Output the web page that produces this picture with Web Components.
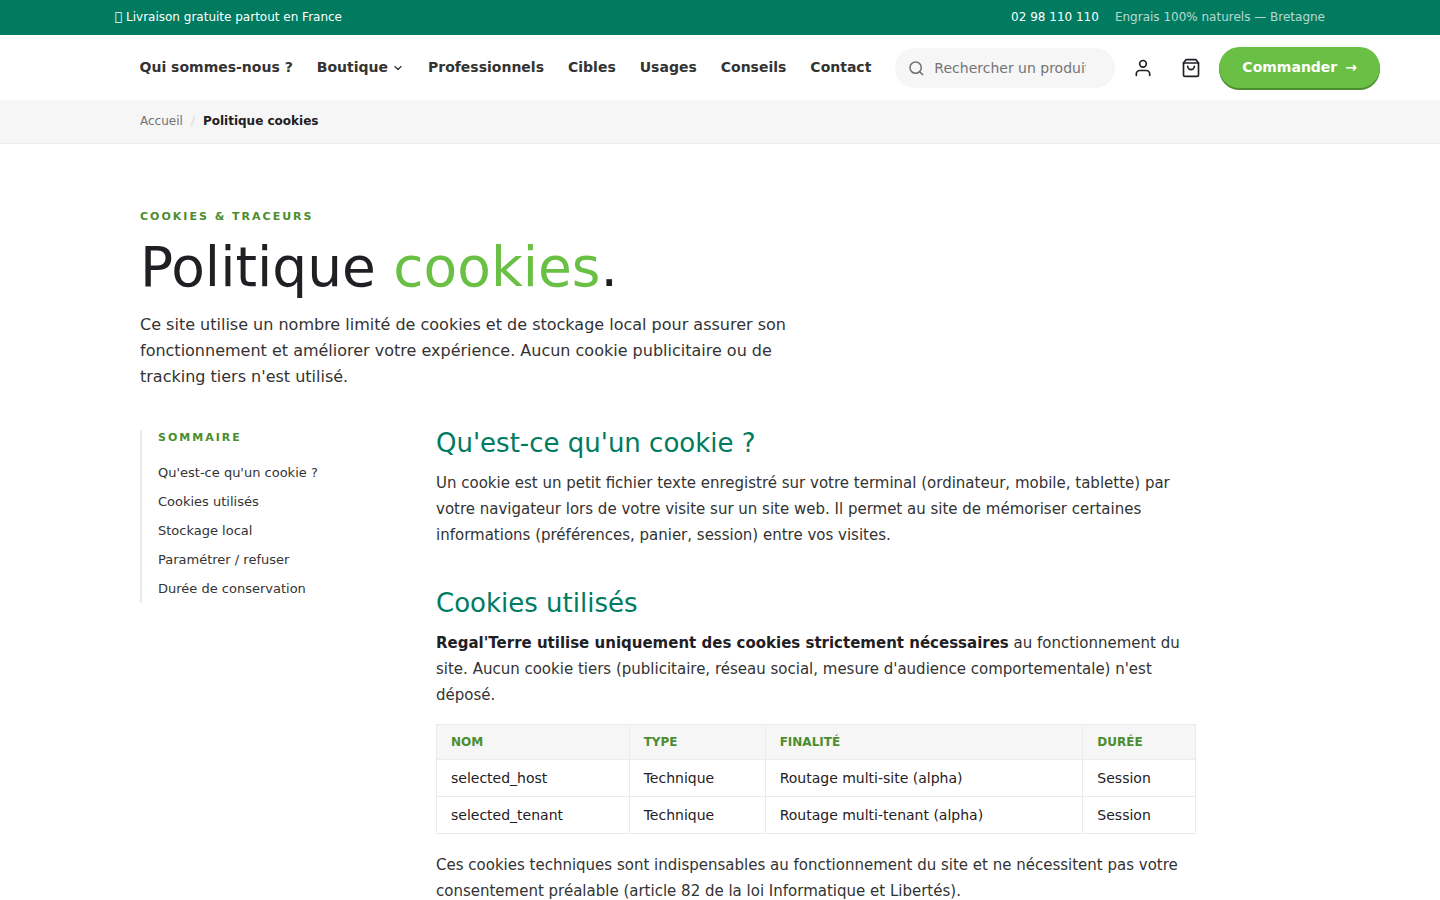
<!DOCTYPE html>
<html lang="fr">
<head>
<meta charset="utf-8">
<meta name="viewport" content="width=device-width, initial-scale=1">
<title>Politique cookies</title>
<style>
  :root {
    --green-dark: #007b5f;
    --green: #6abf45;
    --green-deep: #4b8d2f;
    --ink: #1f2024;
    --text: #333333;
    --muted: #6f7276;
    --line: #ebebeb;
    --soft: #f6f6f6;
    --wrap: 1160px;
  }

  body {
    margin: 0;
    background: #ffffff;
    color: var(--text);
    font-family: "DejaVu Sans", sans-serif;
    font-size: 15px;
    line-height: 26px;
  }

  strong {
    color: var(--ink);
  }
</style>
</head>
<body>
<top-bar>
  <span>&#xf0d1; Livraison gratuite partout en France</span>
  <a slot="phone" href="tel:0298110110">02 98 110 110</a>
  <span slot="note">Engrais 100% naturels — Bretagne</span>
</top-bar>

<site-header>
  <nav-link href="#qui">Qui sommes-nous ?</nav-link>
  <nav-link href="#boutique" menu>Boutique</nav-link>
  <nav-link href="#pro">Professionnels</nav-link>
  <nav-link href="#cibles">Cibles</nav-link>
  <nav-link href="#usages">Usages</nav-link>
  <nav-link href="#conseils">Conseils</nav-link>
  <nav-link href="#contact">Contact</nav-link>
  <search-box slot="tools"></search-box>
  <icon-button slot="tools" icon="user" label="Mon compte"></icon-button>
  <icon-button slot="tools" icon="bag" label="Panier"></icon-button>
  <order-button slot="tools" href="#commander">Commander</order-button>
</site-header>

<bread-crumb>
  <a slot="parent" href="#accueil">Accueil</a>
  Politique cookies
</bread-crumb>

<legal-page>
  <page-intro slot="intro">
    <span slot="eyebrow">Cookies &amp; traceurs</span>
    <span slot="title">Politique <page-accent>cookies</page-accent>.</span>
    Ce site utilise un nombre limité de cookies et de stockage local pour assurer son fonctionnement et améliorer votre expérience. Aucun cookie publicitaire ou de tracking tiers n'est utilisé.
  </page-intro>

  <page-summary slot="summary">
    <a href="#definition">Qu'est-ce qu'un cookie ?</a>
    <a href="#utilises">Cookies utilisés</a>
    <a href="#stockage">Stockage local</a>
    <a href="#refuser">Paramétrer / refuser</a>
    <a href="#duree">Durée de conservation</a>
  </page-summary>

  <text-section id="definition">
    <span slot="title">Qu'est-ce qu'un cookie ?</span>
    <p>Un cookie est un petit fichier texte enregistré sur votre terminal (ordinateur, mobile, tablette) par votre navigateur lors de votre visite sur un site web. Il permet au site de mémoriser certaines informations (préférences, panier, session) entre vos visites.</p>
  </text-section>

  <text-section id="utilises">
    <span slot="title">Cookies utilisés</span>
    <p><strong>Regal'Terre utilise uniquement des cookies strictement nécessaires</strong> au fonctionnement du site. Aucun cookie tiers (publicitaire, réseau social, mesure d'audience comportementale) n'est déposé.</p>
    <cookie-table></cookie-table>
    <p>Ces cookies techniques sont indispensables au fonctionnement du site et ne nécessitent pas votre consentement préalable (article 82 de la loi Informatique et Libertés).</p>
  </text-section>
</legal-page>

<script>
class BaseElement extends HTMLElement {
  constructor() {
    super();
    const template = document.createElement("template");
    template.innerHTML = this.constructor.styles + this.constructor.markup;
    this.attachShadow({ mode: "open" });
    this.shadowRoot.appendChild(template.content.cloneNode(true));
  }
}

class TopBar extends BaseElement {
  static get styles() {
    return `
      <style>
        :host {
          display: block;
          background: var(--green-dark);
          color: #ffffff;
          font-size: 12px;
          line-height: 19px;
        }
        .bar {
          display: flex;
          justify-content: space-between;
          max-width: 1210px;
          margin: 0 auto;
          padding: 8px 15px;
        }
        .right {
          display: flex;
          gap: 16px;
        }
        ::slotted(a) {
          color: inherit;
          text-decoration: none;
        }
        ::slotted([slot="note"]) {
          opacity: 0.7;
        }
      </style>
    `;
  }

  static get markup() {
    return `
      <div class="bar">
        <div><slot></slot></div>
        <div class="right"><slot name="phone"></slot><slot name="note"></slot></div>
      </div>
    `;
  }
}

class SiteHeader extends BaseElement {
  static get styles() {
    return `
      <style>
        :host {
          display: block;
          background: #ffffff;
        }
        header {
          display: flex;
          align-items: center;
          justify-content: flex-end;
          gap: 24px;
          padding: 12px 60px;
        }
        nav {
          display: flex;
          gap: 24px;
        }
        .tools {
          display: flex;
          align-items: center;
          gap: 8px;
        }
      </style>
    `;
  }

  static get markup() {
    return `
      <header>
        <nav aria-label="Navigation principale"><slot></slot></nav>
        <div class="tools"><slot name="tools"></slot></div>
      </header>
    `;
  }
}

class NavLink extends BaseElement {
  static get styles() {
    return `
      <style>
        :host {
          display: block;
          font-size: 14px;
          font-weight: 600;
          line-height: 21px;
        }
        a {
          display: flex;
          align-items: center;
          gap: 4px;
          color: var(--text);
          text-decoration: none;
          white-space: nowrap;
        }
        svg {
          display: none;
        }
        :host([menu]) svg {
          display: block;
        }
      </style>
    `;
  }

  static get markup() {
    return `
      <a>
        <slot></slot>
        <svg width="12" height="12" viewBox="0 0 24 24" fill="none" stroke="currentColor" stroke-width="2.5" stroke-linecap="round" stroke-linejoin="round"><path d="m6 9 6 6 6-6"/></svg>
      </a>
    `;
  }

  connectedCallback() {
    this.shadowRoot.querySelector("a").href = this.getAttribute("href");
  }
}

class SearchBox extends BaseElement {
  static get styles() {
    return `
      <style>
        :host {
          display: block;
          width: 220px;
        }
        label {
          display: flex;
          align-items: center;
          gap: 8px;
          box-sizing: border-box;
          height: 40px;
          padding: 0 14px 0 12px;
          border-radius: 20px;
          background: var(--soft);
          color: var(--muted);
        }
        svg {
          flex: none;
        }
        input {
          flex: 1;
          min-width: 0;
          padding: 1px;
          border: 0;
          outline: 0;
          background: transparent;
          color: var(--ink);
          font: inherit;
          font-size: 14px;
          line-height: 20px;
        }
        input::placeholder {
          color: #757575;
        }
      </style>
    `;
  }

  static get markup() {
    return `
      <label>
        <svg width="18" height="18" viewBox="0 0 24 24" fill="none" stroke="currentColor" stroke-width="2" stroke-linecap="round" stroke-linejoin="round"><circle cx="11.5" cy="11.5" r="7.5"/><path d="m21 21-4.2-4.2"/></svg>
        <input type="search" placeholder="Rechercher un produit…" aria-label="Rechercher un produit">
      </label>
    `;
  }
}

const ICONS = {
  user: `<path d="M20 21v-2a4 4 0 0 0-4-4H8a4 4 0 0 0-4 4v2"/><circle cx="12" cy="7" r="4"/>`,
  bag: `<path d="M6 2 3 6v14a2 2 0 0 0 2 2h14a2 2 0 0 0 2-2V6l-3-4z"/><path d="M3 6h18"/><path d="M16 10a4 4 0 0 1-8 0"/>`,
};

class IconButton extends BaseElement {
  static get styles() {
    return `
      <style>
        :host {
          display: block;
        }
        button {
          display: flex;
          align-items: center;
          justify-content: center;
          width: 40px;
          height: 40px;
          padding: 0;
          border: 0;
          border-radius: 50%;
          background: transparent;
          color: var(--ink);
          cursor: pointer;
        }
      </style>
    `;
  }

  static get markup() {
    return `
      <button type="button">
        <svg width="20" height="20" viewBox="0 0 24 24" fill="none" stroke="currentColor" stroke-width="2" stroke-linecap="round" stroke-linejoin="round"></svg>
      </button>
    `;
  }

  connectedCallback() {
    this.shadowRoot.querySelector("svg").innerHTML = ICONS[this.getAttribute("icon")];
    this.shadowRoot.querySelector("button").setAttribute("aria-label", this.getAttribute("label"));
  }
}

class OrderButton extends BaseElement {
  static get styles() {
    return `
      <style>
        :host {
          display: block;
        }
        a {
          display: flex;
          gap: 8px;
          padding: 10px 23px;
          border-radius: 24px;
          background: var(--green);
          box-shadow: 0 2px 0 var(--green-deep);
          color: #ffffff;
          font-size: 14px;
          font-weight: 700;
          line-height: 21px;
          text-decoration: none;
          white-space: nowrap;
        }
      </style>
    `;
  }

  static get markup() {
    return `<a><slot></slot><span aria-hidden="true">→</span></a>`;
  }

  connectedCallback() {
    this.shadowRoot.querySelector("a").href = this.getAttribute("href");
  }
}

class BreadCrumb extends BaseElement {
  static get styles() {
    return `
      <style>
        :host {
          display: block;
          background: var(--soft);
          border-bottom: 1px solid var(--line);
          font-size: 12px;
          line-height: 19px;
        }
        nav {
          display: flex;
          gap: 8px;
          max-width: var(--wrap);
          margin: 0 auto;
          padding: 12px 40px;
        }
        ::slotted(a) {
          color: var(--muted);
          text-decoration: none;
        }
        .sep {
          color: #d9dde2;
        }
        .current {
          color: var(--ink);
          font-weight: 600;
        }
      </style>
    `;
  }

  static get markup() {
    return `
      <nav aria-label="Fil d'Ariane">
        <slot name="parent"></slot>
        <span class="sep">/</span>
        <span class="current"><slot></slot></span>
      </nav>
    `;
  }
}

class LegalPage extends BaseElement {
  static get styles() {
    return `
      <style>
        :host {
          display: block;
        }
        main {
          max-width: var(--wrap);
          margin: 0 auto;
          padding: 64px 40px;
        }
        .columns {
          display: grid;
          grid-template-columns: 240px minmax(0, 760px);
          align-items: start;
          gap: 56px;
          margin-top: 40px;
        }
        .content {
          display: grid;
          gap: 42px;
        }
      </style>
    `;
  }

  static get markup() {
    return `
      <main>
        <slot name="intro"></slot>
        <div class="columns">
          <slot name="summary"></slot>
          <div class="content"><slot></slot></div>
        </div>
      </main>
    `;
  }
}

class PageIntro extends BaseElement {
  static get styles() {
    return `
      <style>
        :host {
          display: block;
        }
        .eyebrow {
          color: var(--green-deep);
          font-size: 11px;
          font-weight: 700;
          letter-spacing: 2px;
          line-height: 18px;
          text-transform: uppercase;
        }
        h1 {
          margin: 10px 0 14px;
          color: var(--ink);
          font-size: 55px;
          font-weight: 400;
          line-height: 62px;
        }
        p {
          max-width: 680px;
          margin: 0;
          font-size: 16px;
          line-height: 26px;
        }
      </style>
    `;
  }

  static get markup() {
    return `
      <div class="eyebrow"><slot name="eyebrow"></slot></div>
      <h1><slot name="title"></slot></h1>
      <p><slot></slot></p>
    `;
  }
}

class PageAccent extends BaseElement {
  static get styles() {
    return `<style>:host { color: var(--green); }</style>`;
  }

  static get markup() {
    return `<slot></slot>`;
  }
}

class PageSummary extends BaseElement {
  static get styles() {
    return `
      <style>
        :host {
          display: block;
        }
        nav {
          display: grid;
          gap: 8px;
          padding: 0 0 4px 16px;
          border-left: 2px solid var(--line);
          font-size: 13px;
          line-height: 21px;
        }
        h2 {
          margin: 0 0 8px;
          color: var(--green-deep);
          font-size: 11px;
          font-weight: 700;
          letter-spacing: 2px;
          line-height: 16px;
          text-transform: uppercase;
        }
        ::slotted(a) {
          color: var(--text);
          text-decoration: none;
        }
      </style>
    `;
  }

  static get markup() {
    return `
      <nav aria-label="Sommaire">
        <h2>Sommaire</h2>
        <slot></slot>
      </nav>
    `;
  }
}

class TextSection extends BaseElement {
  static get styles() {
    return `
      <style>
        :host {
          display: block;
        }
        h2 {
          margin: 0 0 14px;
          color: var(--green-dark);
          font-size: 26px;
          font-weight: 400;
          line-height: 26px;
        }
        ::slotted(p) {
          margin: 0;
        }
      </style>
    `;
  }

  static get markup() {
    return `
      <h2><slot name="title"></slot></h2>
      <slot></slot>
    `;
  }
}

class CookieTable extends BaseElement {
  static get styles() {
    return `
      <style>
        :host {
          display: block;
          margin: 16px 0 18px;
        }
        table {
          width: 100%;
          border-collapse: collapse;
          color: var(--ink);
          font-size: 14px;
          line-height: 16px;
        }
        th,
        td {
          padding: 10px 14px;
          border: 1px solid var(--line);
          text-align: left;
        }
        th {
          background: var(--soft);
          color: var(--green-deep);
          font-size: 12px;
          font-weight: 700;
          line-height: 14px;
          text-transform: uppercase;
        }
      </style>
    `;
  }

  static get markup() {
    return `
      <table>
        <thead>
          <tr><th>Nom</th><th>Type</th><th>Finalité</th><th>Durée</th></tr>
        </thead>
        <tbody>
          <tr><td>selected_host</td><td>Technique</td><td>Routage multi-site (alpha)</td><td>Session</td></tr>
          <tr><td>selected_tenant</td><td>Technique</td><td>Routage multi-tenant (alpha)</td><td>Session</td></tr>
        </tbody>
      </table>
    `;
  }
}

customElements.define("top-bar", TopBar);
customElements.define("site-header", SiteHeader);
customElements.define("nav-link", NavLink);
customElements.define("search-box", SearchBox);
customElements.define("icon-button", IconButton);
customElements.define("order-button", OrderButton);
customElements.define("bread-crumb", BreadCrumb);
customElements.define("legal-page", LegalPage);
customElements.define("page-intro", PageIntro);
customElements.define("page-accent", PageAccent);
customElements.define("page-summary", PageSummary);
customElements.define("text-section", TextSection);
customElements.define("cookie-table", CookieTable);
</script>
</body>
</html>
